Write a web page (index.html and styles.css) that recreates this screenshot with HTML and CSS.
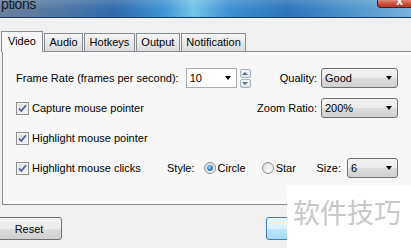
FILE: index.html
```html
<!DOCTYPE html>
<html lang="en">
<head>
  <meta charset="UTF-8" />
  <title>Options</title>
  <link rel="stylesheet" href="styles.css">
</head>
<body>

  <div class="titlebar">
    <span class="title">ptions</span>
    <span class="close">x</span>
  </div>

  <div class="tabs">
    <div class="tab active">Video</div>
    <div class="tab">Audio</div>
    <div class="tab">Hotkeys</div>
    <div class="tab">Output</div>
    <div class="tab">Notification</div>
  </div>

  <div class="panel">
    <div class="rows">
      <div class="row">
        <div class="group">
          <span>Frame Rate (frames per second):</span>
          <div class="combo edit w51"><span>10</span><span class="arrow"></span></div>
          <div class="spin">
            <span class="spin-btn up"></span>
            <span class="spin-btn down"></span>
          </div>
        </div>
        <div class="group">
          <span>Quality:</span>
          <div class="combo w77"><span>Good</span><span class="arrow"></span></div>
        </div>
      </div>

      <div class="row">
        <label class="checkline"><span class="check"><svg width="11" height="11" viewBox="0 0 11 11"><path d="M2 5.5 L4.3 8 L9 2.3" fill="none" stroke="#47609a" stroke-width="1.8"/></svg></span>Capture mouse pointer</label>
        <div class="group">
          <span>Zoom Ratio:</span>
          <div class="combo w77"><span>200%</span><span class="arrow"></span></div>
        </div>
      </div>

      <div class="row">
        <label class="checkline"><span class="check"><svg width="11" height="11" viewBox="0 0 11 11"><path d="M2 5.5 L4.3 8 L9 2.3" fill="none" stroke="#47609a" stroke-width="1.8"/></svg></span>Highlight mouse pointer</label>
      </div>

      <div class="row">
        <div class="group">
          <label class="checkline wide"><span class="check"><svg width="11" height="11" viewBox="0 0 11 11"><path d="M2 5.5 L4.3 8 L9 2.3" fill="none" stroke="#47609a" stroke-width="1.8"/></svg></span>Highlight mouse clicks</label>
          <span>Style:</span>
          <label class="radioline first"><span class="radio on"></span>Circle</label>
          <label class="radioline"><span class="radio"></span>Star</label>
        </div>
        <div class="group">
          <span>Size:</span>
          <div class="combo w51 size"><span>6</span><span class="arrow"></span></div>
        </div>
      </div>
    </div>
  </div>

  <div class="buttons">
    <button class="btn">Reset</button>
    <button class="btn ok"></button>
  </div>

  <div class="watermark">软件技巧</div>

</body>
</html>
```

FILE: styles.css
```css
* {
  box-sizing: border-box;
}

body {
  margin: 0;
  width: 411px;
  height: 248px;
  overflow: hidden;
  position: relative;
  background: #f0f0f0;
  font-family: "Liberation Sans", Arial, sans-serif;
  font-size: 11px;
  color: #000;
}

/* barre de titre */
.titlebar {
  height: 18px;
  display: flex;
  justify-content: space-between;
  align-items: flex-start;
  overflow: hidden;
  border-bottom: 1px solid #22385a;
  background:
    linear-gradient(rgba(255,255,255,0.15), rgba(255,255,255,0) 60%),
    linear-gradient(90deg, #6a819c 0%, #4f77a3 14%, #2f6aab 28%, #3f95d2 40%, #74c3ea 47%, #3d8fcf 56%, #2c74b8 70%, #4f95cc 86%, #78b1db 100%);
}

.title {
  font-size: 14px;
  line-height: 14px;
  margin-top: -3px;
  padding-left: 1px;
  letter-spacing: -0.4px;
  color: #151a22;
}

.close {
  width: 34px;
  height: 9px;
  margin-top: -1px;
  border: 1px solid #4d1a12;
  border-right: 0;
  border-radius: 0 0 0 4px;
  background: linear-gradient(#e08a78, #c44a36 60%, #b23a28);
  color: #fff;
  font-weight: bold;
  font-size: 12px;
  line-height: 2px;
  text-align: center;
  padding-left: 10px;
}

/* onglets */
.tabs {
  display: flex;
  align-items: flex-end;
  height: 21px;
  margin-top: 12px;
  padding-left: 1px;
  position: relative;
  z-index: 1;
}

.tab {
  height: 18px;
  padding: 0 4.5px;
  margin-left: 1px;
  border: 1px solid #898c95;
  border-bottom: 0;
  background: linear-gradient(#f4f4f4, #e9e9e9 50%, #dcdcdc);
  line-height: 17px;
}

.tab.active {
  height: 21px;
  padding: 0 6px;
  margin: 0 0 -1px 0;
  background: #f7f7f7;
  line-height: 19px;
}

.panel {
  margin-left: 2px;
  width: 430px;
  height: 154px;
  border: 1px solid #898c95;
  background: #f7f7f7;
  padding: 16px 0 0 13px;
}

.rows {
  width: 382px;
  display: flex;
  flex-direction: column;
  gap: 10px;
}

.row {
  height: 20px;
  display: flex;
  align-items: center;
  justify-content: space-between;
}

.group {
  display: flex;
  align-items: center;
}

/* listes deroulantes */
.combo {
  height: 20px;
  margin-left: 4px;
  display: flex;
  align-items: center;
  justify-content: space-between;
  padding: 0 5px 0 3px;
  border: 1px solid #707070;
  border-radius: 3px;
  background: linear-gradient(#f3f3f3, #ebebeb 50%, #dddddd 51%, #d0d0d0);
}

.combo.edit {
  margin-left: 7px;
  border-color: #abadb3;
  border-radius: 0;
  background: #fff;
}

.combo.size {
  margin-left: 6px;
}

.w51 { width: 51px; }
.w77 { width: 77px; }

.arrow {
  border-left: 3.5px solid transparent;
  border-right: 3.5px solid transparent;
  border-top: 4px solid #000;
}

.spin {
  margin-left: 3px;
  display: flex;
  flex-direction: column;
  gap: 1px;
}

.spin-btn {
  width: 11px;
  height: 9px;
  border: 1px solid #a7b1bf;
  border-radius: 2px;
  background: linear-gradient(#f4f7fa, #dde4ec);
  display: flex;
  align-items: center;
  justify-content: center;
}

.spin-btn.up::after {
  content: "";
  border-left: 3px solid transparent;
  border-right: 3px solid transparent;
  border-bottom: 3px solid #5c6f88;
}

.spin-btn.down::after {
  content: "";
  border-left: 3px solid transparent;
  border-right: 3px solid transparent;
  border-top: 3px solid #5c6f88;
}

/* cases a cocher */
.checkline {
  display: flex;
  align-items: center;
}

.checkline.wide {
  width: 151px;
}

.check {
  width: 13px;
  height: 13px;
  margin-right: 3px;
  border: 1px solid #8e8f8f;
  background: linear-gradient(135deg, #d9dbe0, #f8f8f8);
  box-shadow: inset 0 0 0 1px #f4f4f4;
  display: flex;
  align-items: center;
  justify-content: center;
}

.radioline {
  display: flex;
  align-items: center;
  margin-left: 16px;
}

.radioline.first {
  margin-left: 9px;
}

.radio {
  width: 12px;
  height: 12px;
  margin-right: 2px;
  border: 1px solid #8e8f8f;
  border-radius: 50%;
  background: radial-gradient(circle at 60% 65%, #fafafa, #d6d8dc);
  display: flex;
  align-items: center;
  justify-content: center;
}

.radio.on::after {
  content: "";
  width: 6px;
  height: 6px;
  border-radius: 50%;
  background: radial-gradient(circle at 40% 35%, #8cd0f5, #1f6fb5 70%, #17507f);
}

/* boutons du bas */
.buttons {
  display: flex;
  margin-top: 12px;
  margin-left: -4px;
}

.btn {
  width: 66px;
  height: 23px;
  border: 1px solid #707070;
  border-radius: 3px;
  background: linear-gradient(#f2f2f2, #ebebeb 50%, #dddddd 51%, #cfcfcf);
  font: inherit;
  color: #000;
  padding: 0;
}

.btn.ok {
  width: 75px;
  margin-left: 204px;
  border-color: #3c7fb1;
  background: linear-gradient(#eaf6fd, #d9f0fc 50%, #bee6fd 51%, #a7d9f5);
}

.watermark {
  position: absolute;
  left: 287px;
  top: 186px;
  right: 0;
  bottom: 0;
  background: #fff;
  padding: 12px 0 0 6px;
  font-family: "Noto Sans CJK SC", sans-serif;
  font-size: 27px;
  line-height: 1;
  color: #c8c8c8;
  white-space: nowrap;
}
```
